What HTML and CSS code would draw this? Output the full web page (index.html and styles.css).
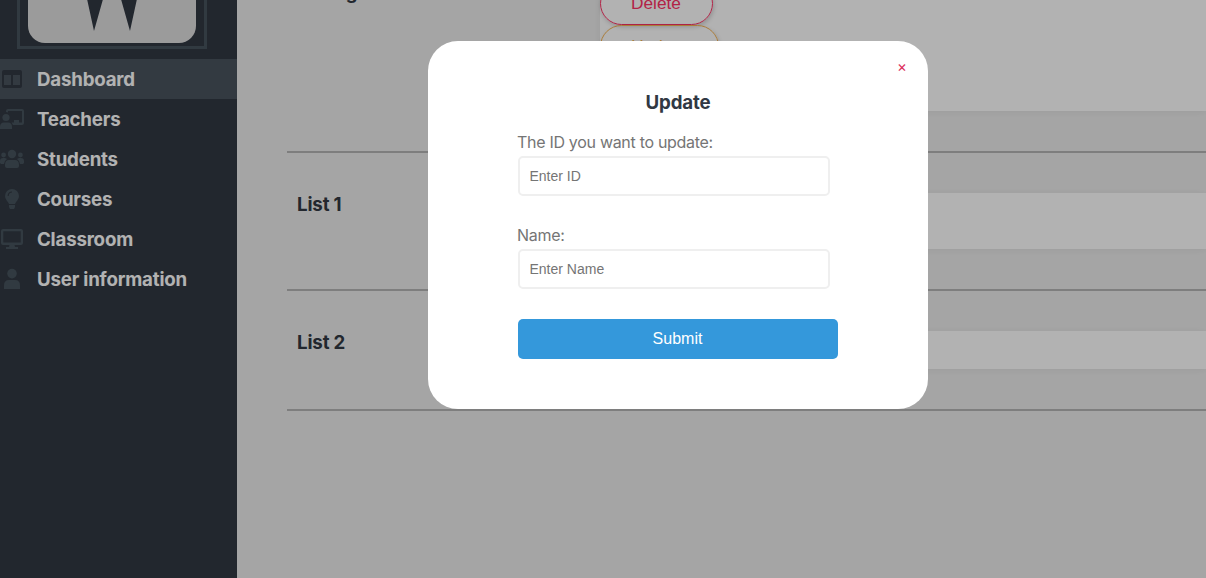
FILE: index.html
```html
<!DOCTYPE html>
<html lang="en">
<head>
<meta charset="utf-8">
<title>Dashboard</title>
<link rel="stylesheet" href="styles.css">
</head>
<body>
<div class="page">
  <aside class="sidebar">
    <div class="brand">
      <svg class="logo" viewBox="0 0 168 168"><rect width="168" height="168" rx="17" fill="#dedede"/><path d="M56 110 66 156 79 110ZM89 110 102 156 112 110Z" fill="#313843"/></svg>
    </div>
    <nav class="menu">
      <a class="item active"><svg class="icon" viewBox="0 0 24 24"><path fill-rule="evenodd" d="M4 3H20Q22 3 22 5V19Q22 21 20 21H4Q2 21 2 19V5Q2 3 4 3ZM4 8V18H11V8ZM13 8V18H20V8Z"/></svg>Dashboard</a>
      <a class="item"><svg class="icon" viewBox="0 0 24 24"><path d="M8 2H22Q24 2 24 4V16Q24 18 22 18H13L11.500 15.500H14V13H19V15.500H22V4H8V5.500Q7 5 6 5V4Q6 2 8 2Z"/><circle cx="6" cy="10.500" r="3.600"/><path d="M0 22V20Q0 15.500 4 15.500H8Q12 15.500 12 20V22Z"/></svg>Teachers</a>
      <a class="item"><svg class="icon" viewBox="0 0 24 24"><circle cx="12" cy="7" r="4.200"/><circle cx="3.600" cy="8" r="2.400"/><circle cx="20.400" cy="8" r="2.400"/><path d="M5 21V18Q5 13 9 13H15Q19 13 19 18V19Q19 21 17 21H7Q5 21 5 19ZM0 16V14Q0 11 3 11H5L7 12Q4 14 4 17H1ZM24 16V14Q24 11 21 11H19L17 12Q20 14 20 17H23Z"/></svg>Students</a>
      <a class="item"><svg class="icon" viewBox="0 0 24 24"><path fill-rule="evenodd" d="M12 2A7 7 0 0 1 19 9Q19 11.500 17.300 13.500 15.500 15.600 15 17H9Q8.500 15.600 6.700 13.500 5 11.500 5 9A7 7 0 0 1 12 2ZM12 4.500Q7.800 4.700 7.600 9H8.700Q8.700 5.700 12 5.600ZM9 18H15V20L14 22H10L9 20Z"/></svg>Courses</a>
      <a class="item"><svg class="icon" viewBox="0 0 24 24"><path fill-rule="evenodd" d="M3 2H21Q23 2 23 4V16Q23 18 21 18H14.500L15 20H18V22H6V20H9L9.500 18H3Q1 18 1 16V4Q1 2 3 2ZM3.300 4.200V15.500H20.700V4.200Z"/></svg>Classroom</a>
      <a class="item"><svg class="icon" viewBox="0 0 24 24"><circle cx="12" cy="6.600" r="4.800"/><path d="M4 22V18.500Q4 13 9 13H15Q20 13 20 18.500V22Z"/></svg>User information</a>
    </nav>
  </aside>
  <main class="content">
    <section class="row row-top">
      <h2 class="label">Configuration</h2>
      <div class="card actions">
        <button class="pill delete">Delete</button>
        <button class="pill update">Update</button>
      </div>
    </section>
    <section class="row row-one"><h2 class="label">List 1</h2><div class="card"></div></section>
    <section class="row row-two"><h2 class="label">List 2</h2><div class="card"></div></section>
  </main>
</div>
<div class="overlay">
  <form class="modal">
    <button class="close" type="button">×</button>
    <h1 class="title">Update</h1>
    <label class="field"><span class="caption">The ID you want to update:</span><input class="input" placeholder="Enter ID"></label>
    <label class="field"><span class="caption">Name:</span><input class="input" placeholder="Enter Name"></label>
    <button class="submit" type="button">Submit</button>
  </form>
</div>
</body>
</html>
```
FILE: styles.css
```css
* { box-sizing: border-box; }
body { margin: 0; overflow: hidden; font-family: Inter, sans-serif; }
.page { display: flex; height: 578px; overflow: hidden; background: #ededed; }
.sidebar { flex: none; width: 237px; background: #313843; overflow: hidden; display: flex; flex-direction: column; }
.brand { flex: none; width: 190px; height: 190px; margin: -141px 0 10px 17px; border: 3px solid #47545d; padding: 0 8px 3px; display: flex; align-items: flex-end; }
.logo { display: block; width: 168px; height: 168px; }
.menu { display: flex; flex-direction: column; }
.item { display: flex; align-items: center; height: 40px; gap: 13px; color: #fff; font-size: 18.7px; font-weight: 700; letter-spacing: -.2px; white-space: nowrap; }
.icon { width: 24px; height: 24px; flex: none; fill: #47545d; }
.active { background: #49545e; }
.active .icon { fill: #313843; }
.content { flex: 1; min-width: 0; padding-left: 50px; }
.row { display: flex; border-bottom: 2px solid #b5b5b5; padding: 40px 0 40px 10px; }
.label { flex: none; width: 303px; margin: 0; font-size: 18.7px; line-height: 24px; font-weight: 700; letter-spacing: -.15px; color: #313843; }
.card { flex: 1; background: #fff; box-shadow: 0 1px 8px rgba(0, 0, 0, .06); }
.row-top { height: 253px; margin-top: -100px; padding-top: 0; }
.row-top .label { padding-top: 81px; }
.row-one { height: 138px; }
.row-two { height: 120px; }
.actions { display: flex; flex-direction: column; align-items: flex-start; padding-top: 82px; }
.pill { flex: none; width: 113px; height: 43px; padding: 0 1px 0 0; background: transparent; border: 1.5px solid #f36; border-radius: 22px; color: #f36; font: 17.3px "Liberation Sans", sans-serif; box-shadow: 1px 2px 4px rgba(0, 0, 0, .18); }
.pill.update { width: 119px; border-color: #f5b353; color: #f5b353; }
.overlay { position: fixed; inset: 0; padding: 41px 0 0 428px; background: rgba(0, 0, 0, .3); }
.modal { display: flex; flex-direction: column; width: 500px; height: 368px; padding: 16px 90px 50px; border-radius: 30px; background: #fff; }
.close { align-self: flex-end; width: 20px; height: 20px; margin-right: -74px; padding: 0; border: 0; background: none; color: #dc2f5b; font: 15px/20px Inter, sans-serif; }
.title { margin: 14px 0 18px; text-align: center; font-size: 18.7px; line-height: 24px; font-weight: 700; letter-spacing: -.15px; color: #313843; }
.field { display: flex; flex-direction: column; height: 93px; color: #757575; font-size: 16px; line-height: 20px; }
.title + .field { margin-top: -1px; }
.caption { margin-left: -1px; letter-spacing: -.3px; }
.input { width: 312px; height: 40px; margin-top: 4px; padding: 0 10px 0 9.5px; border: 2px solid #efefef; border-radius: 5px; background: #fff; font: 14px "Liberation Sans", sans-serif; }
.input::placeholder { color: #757575; }
.submit { height: 40px; margin-top: 1px; padding: 0 1px 0 0; border: 0; border-radius: 5px; background: #3498db; color: #fff; font: 16px "Liberation Sans", sans-serif; }
```
